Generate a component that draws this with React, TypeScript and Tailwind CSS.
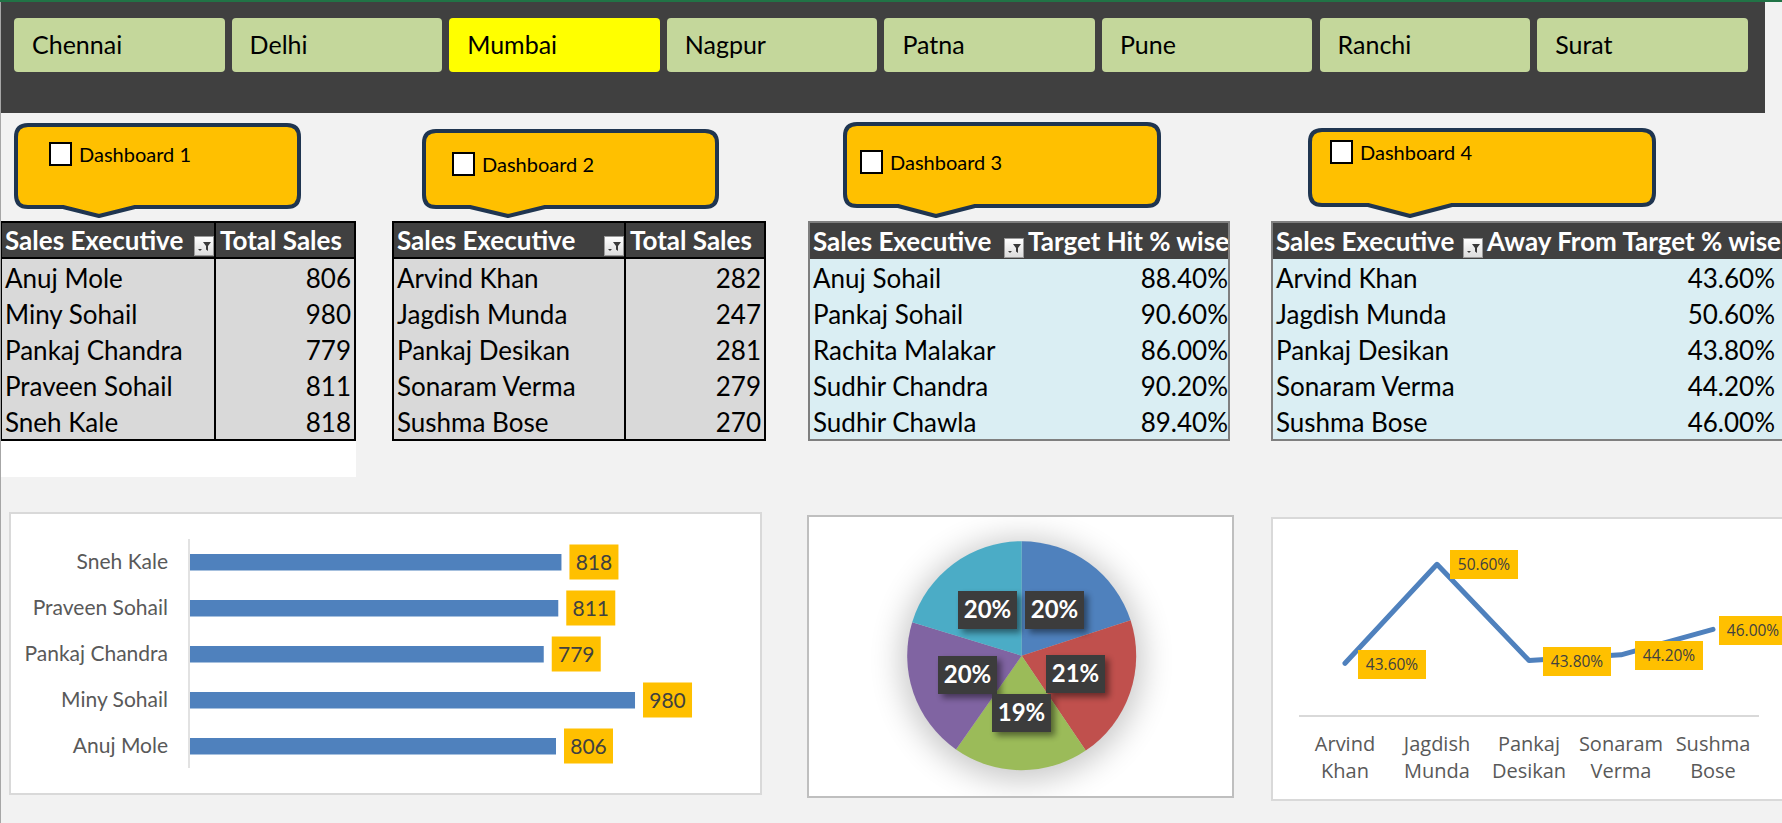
import React from "react";

const tabs = ["Chennai", "Delhi", "Mumbai", "Nagpur", "Patna", "Pune", "Ranchi", "Surat"];

function CalloutShape({ w, h, hb, l, t, r }: { w: number; h: number; hb: number; l: number; t: number; r: number }) {
  const s = 2;
  const rad = 12;
  const d = `M ${s + rad} ${s} H ${w - s - rad} Q ${w - s} ${s} ${w - s} ${s + rad} V ${hb - s - rad} Q ${w - s} ${hb - s} ${w - s - rad} ${hb - s} H ${r} L ${t} ${h - s} L ${l} ${hb - s} H ${s + rad} Q ${s} ${hb - s} ${s} ${hb - s - rad} V ${s + rad} Q ${s} ${s} ${s + rad} ${s} Z`;
  return (
    <svg className="absolute inset-0" width={w} height={h} viewBox={`0 0 ${w} ${h}`}>
      <path d={d} fill="#FFC000" stroke="#1F3550" strokeWidth={4} strokeLinejoin="round" />
    </svg>
  );
}

function CheckLabel({ label }: { label: string }) {
  return (
    <div className="relative flex items-center">
      <div className="w-[23px] h-[24px] border-2 border-black bg-white" />
      <span className="ml-[7px] text-[20px] leading-none text-black">{label}</span>
    </div>
  );
}

function FilterBtn() {
  return (
    <div className="absolute right-0 bottom-[1px] w-[20px] h-[20px] border border-[#9a9a9a] bg-gradient-to-b from-white to-[#dcdcdc]">
      <svg width="18" height="18" viewBox="0 0 18 18">
        <path d="M8 5 H16 L13 9 V14 L11 12.5 V9 Z" fill="#3a3a3a" />
        <path d="M3 12 H7 L5 14 Z" fill="#3a3a3a" />
      </svg>
    </div>
  );
}

type Row = [string, string];

function DataTable({
  h1,
  h2,
  rows,
  wrap,
  c1,
  body,
  divider,
  headLine,
  valPad,
}: {
  h1: string;
  h2: string;
  rows: Row[];
  wrap: string;
  c1: string;
  body: string;
  divider: boolean;
  headLine: boolean;
  valPad: string;
}) {
  return (
    <div className={wrap}>
      <div className={`flex h-[36px] bg-[#404040] text-white font-bold text-[26px] leading-none ${headLine ? "border-b-2 border-black h-[36px]" : "h-[36px]"}`}>
        <div className={`relative ${c1} shrink-0 flex items-center pl-[3px] whitespace-nowrap ${divider ? "border-r-2 border-black" : ""}`}>
          {h1}
          <FilterBtn />
        </div>
        <div className="flex-1 flex items-center pl-[4px] whitespace-nowrap overflow-hidden">{h2}</div>
      </div>
      <div className={body}>
        {rows.map(([a, b]) => (
          <div key={a} className="flex h-[36px] text-[26px] leading-none text-black">
            <div className={`${c1} shrink-0 flex items-center pl-[3px] pt-[2px] whitespace-nowrap ${divider ? "border-r-2 border-black" : ""}`}>{a}</div>
            <div className={`flex-1 flex items-center justify-end pt-[2px] ${valPad}`}>{b}</div>
          </div>
        ))}
      </div>
    </div>
  );
}

const barData = [
  { n: "Sneh Kale", v: 818 },
  { n: "Praveen Sohail", v: 811 },
  { n: "Pankaj Chandra", v: 779 },
  { n: "Miny Sohail", v: 980 },
  { n: "Anuj Mole", v: 806 },
];

function BarChart() {
  const x0 = 179;
  return (
    <svg width="749" height="279" viewBox="0 0 749 279" fontFamily="Lato, sans-serif">
      <line x1={178} y1={25} x2={178} y2={254} stroke="#d9d9d9" strokeWidth={1.5} />
      {barData.map((d, i) => {
        const top = 40 + i * 46;
        const len = d.v * 0.4541;
        const cy = top + 8;
        const bx = x0 + len + 8;
        return (
          <g key={d.n}>
            <text x={157} y={cy + 7} textAnchor="end" fontSize={21} fill="#595959">
              {d.n}
            </text>
            <rect x={x0} y={top} width={len} height={16.5} fill="#4F81BD" />
            <rect x={bx} y={cy - 17.5} width={49} height={35} fill="#FFC000" />
            <text x={bx + 24.5} y={cy + 7.5} textAnchor="middle" fontSize={21} fill="#404040">
              {d.v}
            </text>
          </g>
        );
      })}
    </svg>
  );
}

function PieChart() {
  const cx = 212.7;
  const cy = 138.7;
  const r = 114.5;
  const bounds = [0, 72, 146, 215, 287, 360];
  const colors = ["#4F81BD", "#C0504D", "#9BBB59", "#8064A2", "#4BACC6"];
  const pt = (a: number) => {
    const rad = (a * Math.PI) / 180;
    return [cx + r * Math.sin(rad), cy - r * Math.cos(rad)];
  };
  const labels = [
    { x: 149, y: 74, t: "20%" },
    { x: 216, y: 74, t: "20%" },
    { x: 129, y: 139, t: "20%" },
    { x: 237, y: 138, t: "21%" },
    { x: 183, y: 177, t: "19%" },
  ];
  return (
    <svg width="423" height="279" viewBox="0 0 423 279" fontFamily="Lato, sans-serif">
      <defs>
        <filter id="pieShadow" x="-50%" y="-50%" width="200%" height="200%">
          <feGaussianBlur stdDeviation="16" />
        </filter>
        <filter id="boxShadow" x="-30%" y="-30%" width="160%" height="160%">
          <feGaussianBlur stdDeviation="3" />
        </filter>
      </defs>
      <circle cx={cx} cy={cy + 4} r={r + 6} fill="#000" opacity={0.22} filter="url(#pieShadow)" />
      {colors.map((c, i) => {
        const [x1, y1] = pt(bounds[i]);
        const [x2, y2] = pt(bounds[i + 1]);
        const large = bounds[i + 1] - bounds[i] > 180 ? 1 : 0;
        return <path key={c} d={`M ${cx} ${cy} L ${x1} ${y1} A ${r} ${r} 0 ${large} 1 ${x2} ${y2} Z`} fill={c} />;
      })}
      {labels.map((l, i) => (
        <g key={i}>
          <rect x={l.x + 4} y={l.y + 4} width={59} height={38} fill="#000" opacity={0.45} filter="url(#boxShadow)" />
          <rect x={l.x} y={l.y} width={59} height={38} fill="#3c3c3c" />
          <text x={l.x + 29.5} y={l.y + 27} textAnchor="middle" fontSize={24} fontWeight={700} fill="#fff">
            {l.t}
          </text>
        </g>
      ))}
    </svg>
  );
}

function LineChart() {
  const xs = [72, 164, 256, 348, 440];
  const vals = [43.6, 50.6, 43.8, 44.2, 46.0];
  const ys = vals.map((v) => 144.3 - (v - 43.6) * 14.14);
  const names = [
    ["Arvind", "Khan"],
    ["Jagdish", "Munda"],
    ["Pankaj", "Desikan"],
    ["Sonaram", "Verma"],
    ["Sushma", "Bose"],
  ];
  const boxes = [
    { x: 85, y: 131, t: "43.60%" },
    { x: 177, y: 31, t: "50.60%" },
    { x: 270, y: 128, t: "43.80%" },
    { x: 362, y: 122, t: "44.20%" },
    { x: 446, y: 97, t: "46.00%" },
  ];
  const d = xs.map((x, i) => `${i === 0 ? "M" : "L"} ${x} ${ys[i]}`).join(" ");
  return (
    <svg width="526" height="280" viewBox="0 0 526 280" fontFamily="'Open Sans', sans-serif">
      <line x1={26} y1={197} x2={486} y2={197} stroke="#d9d9d9" strokeWidth={2} />
      <path d={d} fill="none" stroke="#4F81BD" strokeWidth={5} strokeLinecap="round" strokeLinejoin="round" />
      {boxes.map((b) => (
        <g key={b.t + b.x}>
          <rect x={b.x} y={b.y} width={68} height={29} fill="#FFC000" />
          <text x={b.x + 34} y={b.y + 20} textAnchor="middle" fontSize={15.5} fill="#404040">
            {b.t}
          </text>
        </g>
      ))}
      {names.map((n, i) => (
        <g key={n[0]}>
          <text x={xs[i]} y={232} textAnchor="middle" fontSize={20} fill="#595959">
            {n[0]}
          </text>
          <text x={xs[i]} y={259} textAnchor="middle" fontSize={20} fill="#595959">
            {n[1]}
          </text>
        </g>
      ))}
    </svg>
  );
}

export default function App() {
  return (
    <div className="relative w-[1782px] h-[823px] overflow-hidden bg-[#f2f2f2] font-[Lato,sans-serif]">
      <div className="h-[2px] bg-[#217346]" />
      <div className="flex">
        <div className="w-[1765px] h-[111px] bg-[#404040] flex gap-[7.1px] pl-[14px] pt-[16px] items-start shrink-0">
          {tabs.map((t) => (
            <div
              key={t}
              className={`w-[210.5px] h-[54px] shrink-0 rounded-[4px] flex items-center pl-[18px] text-[25px] text-black ${t === "Mumbai" ? "bg-[#FFFF00]" : "bg-[#C4D79B]"}`}
            >
              {t}
            </div>
          ))}
        </div>
      </div>

      <div className="flex items-start h-[108px]">
        <div className="relative shrink-0 ml-[14px] mt-[10px] w-[287px] h-[95px]">
          <CalloutShape w={287} h={95} hb={86} l={49} t={85} r={121} />
          <div className="relative pl-[35px] pt-[19px]">
            <CheckLabel label="Dashboard 1" />
          </div>
        </div>
        <div className="relative shrink-0 ml-[121px] mt-[16px] w-[297px] h-[89px]">
          <CalloutShape w={297} h={89} hb={80} l={48} t={86} r={123} />
          <div className="relative pl-[30px] pt-[23px]">
            <CheckLabel label="Dashboard 2" />
          </div>
        </div>
        <div className="relative shrink-0 ml-[124px] mt-[9px] w-[318px] h-[96px]">
          <CalloutShape w={318} h={96} hb={86} l={55} t={93} r={132} />
          <div className="relative pl-[17px] pt-[28px]">
            <CheckLabel label="Dashboard 3" />
          </div>
        </div>
        <div className="relative shrink-0 ml-[147px] mt-[15px] w-[348px] h-[90px]">
          <CalloutShape w={348} h={90} hb={79} l={60} t={102} r={144} />
          <div className="relative pl-[22px] pt-[12px]">
            <CheckLabel label="Dashboard 4" />
          </div>
        </div>
      </div>

      <div className="flex items-start h-[256px]">
        <div className="w-[356px] h-[256px] bg-white shrink-0">
          <DataTable
            h1="Sales Executive"
            h2="Total Sales"
            rows={[
              ["Anuj Mole", "806"],
              ["Miny Sohail", "980"],
              ["Pankaj Chandra", "779"],
              ["Praveen Sohail", "811"],
              ["Sneh Kale", "818"],
            ]}
            wrap="w-[356px] border-2 border-black"
            c1="w-[214px]"
            body="bg-[#D9D9D9]"
            divider={true}
            headLine={true}
            valPad="pr-[3px]"
          />
        </div>
        <div className="ml-[36px] shrink-0">
          <DataTable
            h1="Sales Executive"
            h2="Total Sales"
            rows={[
              ["Arvind Khan", "282"],
              ["Jagdish Munda", "247"],
              ["Pankaj Desikan", "281"],
              ["Sonaram Verma", "279"],
              ["Sushma Bose", "270"],
            ]}
            wrap="w-[374px] border-2 border-black"
            c1="w-[232px]"
            body="bg-[#D9D9D9]"
            divider={true}
            headLine={true}
            valPad="pr-[3px]"
          />
        </div>
        <div className="ml-[42px] shrink-0">
          <DataTable
            h1="Sales Executive"
            h2="Target Hit % wise"
            rows={[
              ["Anuj Sohail", "88.40%"],
              ["Pankaj Sohail", "90.60%"],
              ["Rachita Malakar", "86.00%"],
              ["Sudhir Chandra", "90.20%"],
              ["Sudhir Chawla", "89.40%"],
            ]}
            wrap="w-[422px] border-2 border-[#7f7f7f]"
            c1="w-[214px]"
            body="bg-[#DAEEF3]"
            divider={false}
            headLine={false}
            valPad="pr-[0px]"
          />
        </div>
        <div className="ml-[41px] shrink-0">
          <DataTable
            h1="Sales Executive"
            h2="Away From Target % wise"
            rows={[
              ["Arvind Khan", "43.60%"],
              ["Jagdish Munda", "50.60%"],
              ["Pankaj Desikan", "43.80%"],
              ["Sonaram Verma", "44.20%"],
              ["Sushma Bose", "46.00%"],
            ]}
            wrap="w-[513px] border-2 border-[#7f7f7f]"
            c1="w-[210px]"
            body="bg-[#DAEEF3]"
            divider={false}
            headLine={false}
            valPad="pr-[7px]"
          />
        </div>
      </div>

      <div className="flex items-start">
        <div className="shrink-0 ml-[9px] mt-[35px] w-[753px] h-[283px] border-2 border-[#d9d9d9] bg-white">
          <BarChart />
        </div>
        <div className="shrink-0 ml-[45px] mt-[38px] w-[427px] h-[283px] border-2 border-[#bfbfbf] bg-white">
          <PieChart />
        </div>
        <div className="shrink-0 ml-[37px] mt-[40px] w-[530px] h-[284px] border-2 border-[#d9d9d9] bg-white">
          <LineChart />
        </div>
      </div>

      <div className="absolute left-0 top-[2px] bottom-0 w-[1px] bg-[#a6a6a6]" />
    </div>
  );
}
